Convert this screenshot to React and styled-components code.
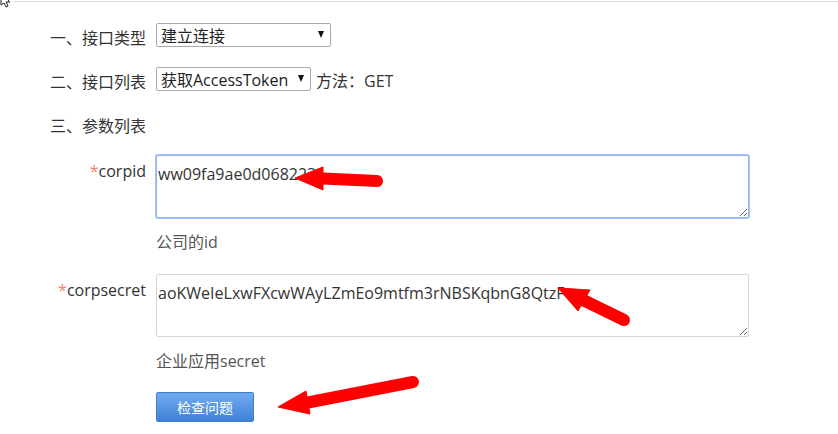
import React from "react";
import styled, { createGlobalStyle } from "styled-components";

const GlobalStyle = createGlobalStyle`
  html, body {
    margin: 0;
    padding: 0;
    background: #fff;
  }
  body {
    font-family: "Open Sans", "Noto Sans CJK SC", sans-serif;
    color: #333;
  }
`;

const Page = styled.div`
  position: relative;
  width: 838px;
  height: 434px;
  overflow: hidden;
  background: #fff;
`;

const TopRule = styled.div`
  height: 1px;
  margin: 1px 0 0 14px;
  background: #dcdcdc;
`;

const Cursor = styled.svg`
  position: absolute;
  left: 0;
  top: 0;
`;

const Form = styled.div`
  padding: 21px 0 0 50px;
`;

const SectionRow = styled.div`
  display: flex;
  align-items: center;
  height: 24px;
  margin-bottom: 20px;
  font-size: 16px;
`;

const SectionLabel = styled.span`
  width: 106px;
  padding-top: 6px;
  line-height: 24px;
  white-space: nowrap;
`;

const SelectBox = styled.div`
  box-sizing: border-box;
  width: ${(p) => p.$width}px;
  height: 24px;
  display: flex;
  align-items: center;
  justify-content: space-between;
  padding: 0 6px 0 4px;
  border: 1px solid #a9a9a9;
  border-radius: 2px;
  font-size: 16px;
  color: #222;
  background: #fff;
`;

const Caret = styled.span`
  width: 0;
  height: 0;
  margin-top: -2px;
  border-left: 3.5px solid transparent;
  border-right: 3.5px solid transparent;
  border-top: 7px solid #111;
`;

const Method = styled.span`
  margin-left: 5px;
  padding-top: 2px;
`;

const Params = styled.div`
  display: grid;
  grid-template-columns: 96px 593px;
  column-gap: 10px;
`;

const ParamLabel = styled.div`
  padding-top: 4px;
  text-align: right;
  font-size: 16px;
  line-height: 24px;

  &::before {
    content: "*";
    color: #f0826e;
  }
`;

const Field = styled.div`
  display: flex;
  flex-direction: column;
  margin-bottom: 20px;
`;

const TextArea = styled.textarea`
  box-sizing: border-box;
  width: 593px;
  height: ${(p) => p.$height}px;
  margin: 0;
  padding: 6px 1px 0;
  font-family: "Open Sans", "Noto Sans CJK SC", sans-serif;
  font-size: 16px;
  line-height: 24px;
  color: #333;
  border: 1px solid ${(p) => (p.$focused ? "#8fb2f2" : "#d6d6d6")};
  box-shadow: ${(p) => (p.$focused ? "0 0 0 1px #a9c4f5" : "none")};
  border-radius: 2px;
  outline: none;
  overflow: hidden;
  white-space: nowrap;
`;

const Help = styled.div`
  margin-top: 12px;
  font-size: 16px;
  line-height: 24px;
  color: #555;
`;

const Button = styled.button`
  grid-column: 2;
  box-sizing: border-box;
  width: 98px;
  height: 30px;
  margin: -1px 0 0;
  padding: 0;
  border: 1px solid #3f7fc9;
  border-radius: 2px;
  background: linear-gradient(#73aaee, #3f82d8);
  color: #fff;
  font-family: "Noto Sans CJK SC", sans-serif;
  font-size: 14px;
`;

const Overlay = styled.svg`
  position: absolute;
  left: 0;
  top: 0;
  pointer-events: none;
`;

const Arrow = ({ tail, tip, base1, base2, width = 11 }) => {
  const mx = (base1[0] + base2[0]) / 2;
  const my = (base1[1] + base2[1]) / 2;
  return (
    <g fill="#ff0000" stroke="#ff0000">
      <line
        x1={tail[0]}
        y1={tail[1]}
        x2={mx}
        y2={my}
        strokeWidth={width}
        strokeLinecap="round"
      />
      <polygon
        points={`${tip[0]},${tip[1]} ${base1[0]},${base1[1]} ${base2[0]},${base2[1]}`}
        strokeWidth="1"
        strokeLinejoin="round"
      />
    </g>
  );
};

const App = () => {
  return (
    <Page>
      <GlobalStyle />
      <TopRule />
      <Cursor width="14" height="8" viewBox="0 0 14 8">
        <path
          d="M1 0 L1 5 L4 3 L6 7 L8 6 L6 2 L10 2 L8 0"
          fill="#fff"
          stroke="#222"
          strokeWidth="1"
        />
      </Cursor>
      <Form>
        <SectionRow>
          <SectionLabel>一、接口类型</SectionLabel>
          <SelectBox $width={175}>
            建立连接
            <Caret />
          </SelectBox>
        </SectionRow>
        <SectionRow>
          <SectionLabel>二、接口列表</SectionLabel>
          <SelectBox $width={155}>
            获取AccessToken
            <Caret />
          </SelectBox>
          <Method>方法：GET</Method>
        </SectionRow>
        <SectionRow>
          <SectionLabel>三、参数列表</SectionLabel>
        </SectionRow>
        <Params>
          <ParamLabel>corpid</ParamLabel>
          <Field>
            <TextArea
              $height={63}
              $focused
              readOnly
              defaultValue="ww09fa9ae0d068223"
            />
            <Help>公司的id</Help>
          </Field>
          <ParamLabel>corpsecret</ParamLabel>
          <Field>
            <TextArea
              $height={63}
              readOnly
              defaultValue="aoKWeIeLxwFXcwWAyLZmEo9mtfm3rNBSKqbnG8QtzFc"
            />
            <Help>企业应用secret</Help>
          </Field>
          <Button>检查问题</Button>
        </Params>
      </Form>
      <Overlay width="838" height="434" viewBox="0 0 838 434">
        <Arrow tail={[377, 181]} tip={[295, 178]} base1={[323, 167]} base2={[323, 190]} width={12} />
        <Arrow tail={[624, 320]} tip={[558, 288]} base1={[590, 290]} base2={[578, 311]} width={12} />
        <Arrow tail={[413, 382]} tip={[278, 407]} base1={[306, 391]} base2={[310, 414]} width={12} />
      </Overlay>
    </Page>
  );
};

export default App;
